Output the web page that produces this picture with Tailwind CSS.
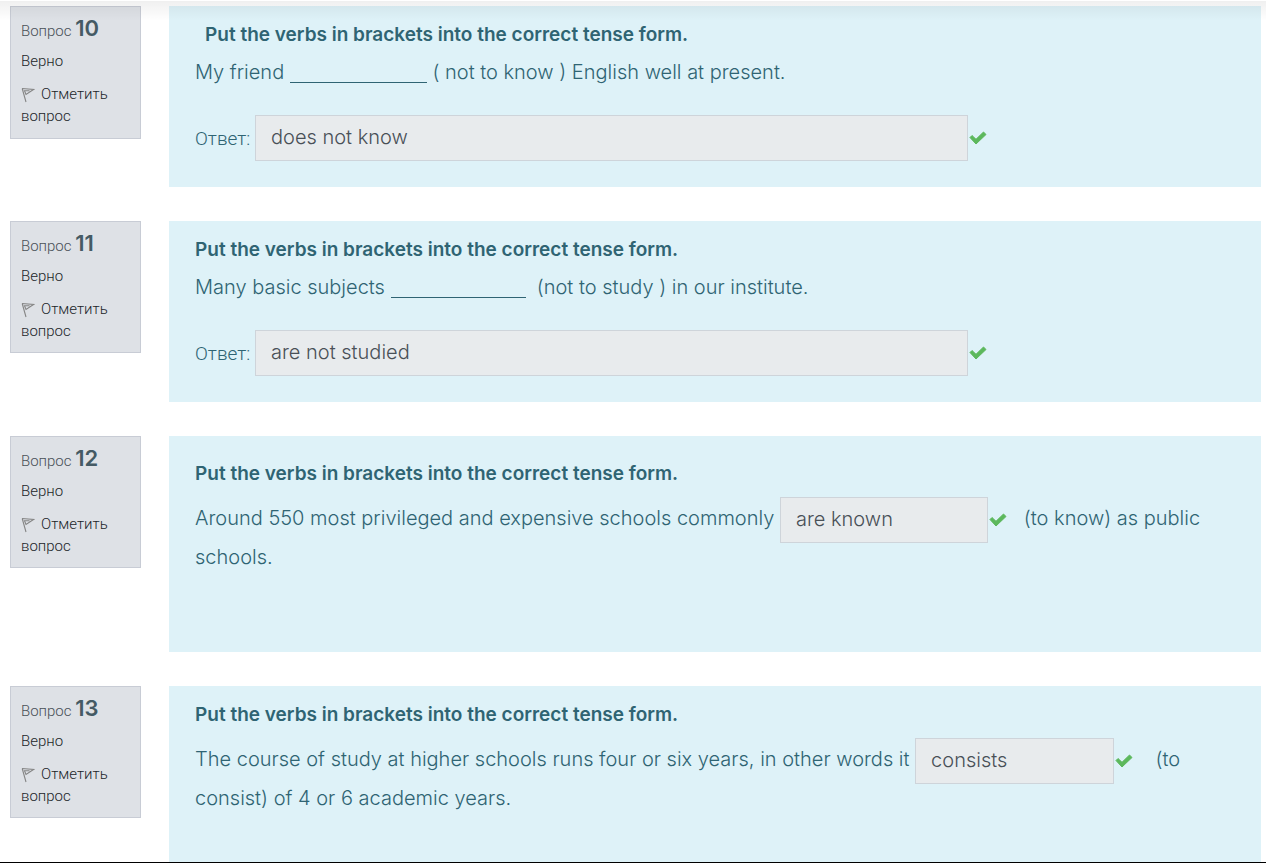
<!DOCTYPE html>
<html lang="ru">
<head>
<meta charset="utf-8">
<meta name="viewport" content="width=device-width, initial-scale=1">
<title>Тест</title>
<script src="https://cdn.jsdelivr.net/npm/@tailwindcss/browser@4"></script>
</head>
<body class="h-screen overflow-hidden border-b border-black bg-white font-['Inter',sans-serif] font-light">
<svg class="hidden" aria-hidden="true">
  <symbol id="flag" viewBox="0 0 14 16"><path d="M1 1.500 12.500 2.500 5 7.500 3.500 3.800 8.500 3.800M1.200 1.500 5 15" fill="none" stroke="#858585" stroke-width="1.100"/></symbol>
  <symbol id="check" viewBox="0 0 18 14"><path d="M1 6.500 3 4.500 7 8.300 14.500 1 17 3.500 7 13Z" fill="#5cb85c" stroke="#5cb85c" stroke-width="1" stroke-linejoin="round"/></symbol>
</svg>
<div class="pointer-events-none absolute inset-x-0 top-px h-5 bg-linear-to-b from-black/6 to-transparent"></div>
<main class="flex flex-col gap-[34px] pt-1.5 pr-[5px] pl-2.5">

  <section class="flex items-start gap-7">
    <aside class="h-[133px] w-[131px] shrink-0 border border-[#c8ccd5] bg-[#dee1e6] px-2.5 pt-[7px] font-['Roboto',sans-serif] text-[15px] text-[#212529]">
      <h3 class="leading-7 text-[#495057]">Вопрос <span class="font-['Inter',sans-serif] text-[22px] font-semibold text-[#455a64]">10</span></h3>
      <div class="mt-0.5 leading-7">Верно</div>
      <button type="button" class="mt-2 block text-left leading-[22px]"><svg class="mr-1.5 inline h-4 w-3.5"><use href="#flag"/></svg>Отметить вопрос</button>
    </aside>
    <div class="min-h-[181px] min-w-0 flex-1 bg-[#def2f8] px-[26px] pt-2.5 text-[20px] leading-[37px] text-[#2f6473]">
      <p class="pl-2.5 text-[19px] leading-[37px] font-semibold">Put the verbs in brackets into the correct tense form.</p>
      <p class="mt-px">My friend <span class="inline-block h-[18px] w-[137px] border-b border-[#2f6473] align-middle"></span> ( not to know ) English well at present.</p>
      <div class="mt-6 flex items-center">
        <label for="a10" class="w-[60px] shrink-0 font-['Roboto',sans-serif] text-[19px]">Ответ:</label>
        <input id="a10" readonly value="does not know" class="h-[46px] w-[713px] border border-[#ced4da] bg-[#e8ebed] px-[15px] pb-0.5 text-[#495057]">
        <svg class="ml-px h-3.5 w-[18px]" role="img" aria-label="Верно"><use href="#check"/></svg>
      </div>
    </div>
  </section>

  <section class="flex items-start gap-7">
    <aside class="h-[132px] w-[131px] shrink-0 border border-[#c8ccd5] bg-[#dee1e6] px-2.5 pt-[7px] font-['Roboto',sans-serif] text-[15px] text-[#212529]">
      <h3 class="leading-7 text-[#495057]">Вопрос <span class="font-['Inter',sans-serif] text-[22px] font-semibold text-[#455a64]">11</span></h3>
      <div class="mt-0.5 leading-7">Верно</div>
      <button type="button" class="mt-2 block text-left leading-[22px]"><svg class="mr-1.5 inline h-4 w-3.5"><use href="#flag"/></svg>Отметить вопрос</button>
    </aside>
    <div class="min-h-[181px] min-w-0 flex-1 bg-[#def2f8] px-[26px] pt-2.5 text-[20px] leading-[37px] text-[#2f6473]">
      <p class="text-[19px] leading-[37px] font-semibold">Put the verbs in brackets into the correct tense form.</p>
      <p class="mt-px">Many basic subjects <span class="inline-block h-[18px] w-[135px] border-b border-[#2f6473] align-middle"></span>&nbsp; (not to study ) in our institute.</p>
      <div class="mt-6 flex items-center">
        <label for="a11" class="w-[60px] shrink-0 font-['Roboto',sans-serif] text-[19px]">Ответ:</label>
        <input id="a11" readonly value="are not studied" class="h-[46px] w-[713px] border border-[#ced4da] bg-[#e8ebed] px-[15px] pb-0.5 text-[#495057]">
        <svg class="ml-px h-3.5 w-[18px]" role="img" aria-label="Верно"><use href="#check"/></svg>
      </div>
    </div>
  </section>

  <section class="flex items-start gap-7">
    <aside class="h-[132px] w-[131px] shrink-0 border border-[#c8ccd5] bg-[#dee1e6] px-2.5 pt-[7px] font-['Roboto',sans-serif] text-[15px] text-[#212529]">
      <h3 class="leading-7 text-[#495057]">Вопрос <span class="font-['Inter',sans-serif] text-[22px] font-semibold text-[#455a64]">12</span></h3>
      <div class="mt-0.5 leading-7">Верно</div>
      <button type="button" class="mt-2 block text-left leading-[22px]"><svg class="mr-1.5 inline h-4 w-3.5"><use href="#flag"/></svg>Отметить вопрос</button>
    </aside>
    <div class="min-h-[216px] min-w-0 flex-1 bg-[#def2f8] px-[26px] pt-[19px] text-[20px] leading-[37px] text-[#2f6473]">
      <p class="text-[19px] leading-[37px] font-semibold">Put the verbs in brackets into the correct tense form.</p>
      <p class="mt-2">Around 550 most privileged and expensive schools commonly <input aria-label="Ответ 12" readonly value="are known" class="-my-1 h-[46px] w-[208px] border border-[#ced4da] bg-[#e8ebed] px-[15px] pb-0.5 align-middle text-[#495057]"><svg class="ml-px inline h-3.5 w-[18px]" role="img" aria-label="Верно"><use href="#check"/></svg>&nbsp;&nbsp; (to know) as public schools.</p>
    </div>
  </section>

  <section class="flex items-start gap-7">
    <aside class="h-[132px] w-[131px] shrink-0 border border-[#c8ccd5] bg-[#dee1e6] px-2.5 pt-[7px] font-['Roboto',sans-serif] text-[15px] text-[#212529]">
      <h3 class="leading-7 text-[#495057]">Вопрос <span class="font-['Inter',sans-serif] text-[22px] font-semibold text-[#455a64]">13</span></h3>
      <div class="mt-0.5 leading-7">Верно</div>
      <button type="button" class="mt-2 block text-left leading-[22px]"><svg class="mr-1.5 inline h-4 w-3.5"><use href="#flag"/></svg>Отметить вопрос</button>
    </aside>
    <div class="min-h-[216px] min-w-0 flex-1 bg-[#def2f8] px-[26px] pt-2.5 text-[20px] leading-[37px] text-[#2f6473]">
      <p class="text-[19px] leading-[37px] font-semibold">Put the verbs in brackets into the correct tense form.</p>
      <p class="mt-2">The course of study at higher schools runs four or six years, in other words it <input aria-label="Ответ 13" readonly value="consists" class="-my-1 h-[46px] w-[199px] border border-[#ced4da] bg-[#e8ebed] px-[15px] pb-0.5 align-middle text-[#495057]"><svg class="ml-px inline h-3.5 w-[18px]" role="img" aria-label="Верно"><use href="#check"/></svg>&nbsp;&nbsp;&nbsp; (to consist) of 4 or 6 academic years.</p>
    </div>
  </section>

</main>
</body>
</html>
